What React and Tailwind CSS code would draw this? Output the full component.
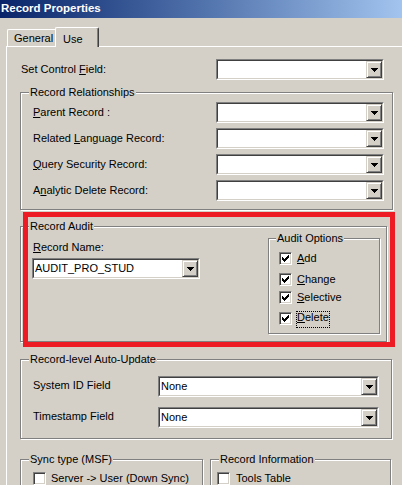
import React from 'react';

const font = { fontFamily: '"Liberation Sans", Arial, sans-serif' };

function Arrow() {
  return (
    <svg width="7" height="4" viewBox="0 0 7 4" shapeRendering="crispEdges">
      <path d="M0 0h7v1H0zM1 1h5v1H1zM2 2h3v1H2zM3 3h1v1H3z" fill="#000" />
    </svg>
  );
}

function Combo({ className = '', value = '' }) {
  return (
    <div className={`h-[21px] flex border border-t-[#808080] border-l-[#808080] border-r-white border-b-white ${className}`}>
      <div className="flex-1 flex bg-white border border-t-[#404040] border-l-[#404040] border-r-[#d4d0c8] border-b-[#d4d0c8]">
        <span className="flex-1 flex items-center pl-[1px] leading-none">{value}</span>
        <div className="w-[16px] h-full flex items-center justify-center bg-[#d4d0c8] border border-t-[#d4d0c8] border-l-[#d4d0c8] border-r-[#404040] border-b-[#404040] shadow-[inset_1px_1px_0_#fff,inset_-1px_-1px_0_#808080]">
          <Arrow />
        </div>
      </div>
    </div>
  );
}

function Check({ checked }) {
  return (
    <div className="w-[13px] h-[13px] shrink-0 bg-white border border-t-[#808080] border-l-[#808080] border-r-white border-b-white shadow-[inset_1px_1px_0_#404040,inset_-1px_-1px_0_#d4d0c8]">
      {checked && (
        <svg width="11" height="11" viewBox="0 0 11 11" shapeRendering="crispEdges">
          <path d="M2 4h1v3H2zM3 5h1v3H3zM4 6h1v3H4zM5 5h1v3H5zM6 4h1v3H6zM7 3h1v3H7zM8 2h1v3H8z" fill="#000" />
        </svg>
      )}
    </div>
  );
}

// etched group box, legend sits on the top line
function Group({ title, className = '', children, legendLeft = 'left-[8px]' }) {
  return (
    <div className={`relative border border-[#808080] shadow-[1px_1px_0_#fff,inset_1px_1px_0_#fff] ${className}`}>
      <span className={`absolute -top-[8px] ${legendLeft} px-[1px] bg-[#d4d0c8] leading-[14px] whitespace-nowrap`}>{title}</span>
      {children}
    </div>
  );
}

function U({ children }) {
  return <span className="underline underline-offset-[1px]">{children}</span>;
}

export default function App() {
  return (
    <div className="w-[402px] h-[485px] overflow-hidden bg-[#d4d0c8] text-[11px] text-black" style={font}>
      {/* title bar */}
      <div className="h-[18px] flex items-center pl-[1px] bg-linear-to-r from-[#0a246a] to-[#a2c4ee]">
        <span className="text-white font-bold text-[11.5px]">Record Properties</span>
      </div>

      {/* tabs */}
      <div className="h-[28px] flex items-end pl-[7px]">
        <div className="w-[48px] h-[17px] flex items-center pl-[6px] border-t border-l border-white rounded-tl-[2px]">
          General
        </div>
        <div className="relative z-10 -mb-[1px] w-[44px] h-[20px] flex items-start pt-[3px] pl-[7px] bg-[#d4d0c8] border-t border-l border-white border-r border-r-[#404040] shadow-[inset_-1px_0_0_#808080] rounded-t-[2px]">
          Use
        </div>
      </div>

      {/* tab page */}
      <div className="ml-[6px] h-[500px] border-t border-l border-white pl-[13px] flow-root">
        <div className="mt-[12px] flex items-center h-[21px] pl-[1px]">
          <span className="w-[195px]">Set Control <U>F</U>ield:</span>
          <Combo className="w-[168px]" />
        </div>

        <Group title="Record Relationships" className="mt-[12px] w-[373px] h-[118px]">
          <div className="pt-[9px] pl-[12px] flex flex-col gap-[5px]">
            <div className="flex items-center h-[21px]">
              <span className="w-[183px]"><U>P</U>arent Record :</span>
              <Combo className="w-[168px]" />
            </div>
            <div className="flex items-center h-[21px]">
              <span className="w-[183px]">Related <U>L</U>anguage Record:</span>
              <Combo className="w-[168px]" />
            </div>
            <div className="flex items-center h-[21px]">
              <span className="w-[183px]"><U>Q</U>uery Security Record:</span>
              <Combo className="w-[168px]" />
            </div>
            <div className="flex items-center h-[21px]">
              <span className="w-[183px]">A<U>n</U>alytic Delete Record:</span>
              <Combo className="w-[168px]" />
            </div>
          </div>
        </Group>

        {/* audit section with the red highlight drawn over it */}
        <div className="relative mt-[2px] h-[135px] pt-[14px]">
          <Group title="Record Audit" className="w-[367px] h-[116px]">
            <div className="flex">
              <div className="w-[247px] pl-[11px] pt-[13px]">
                <div className="h-[14px] flex items-center pl-[1px]"><U>R</U>ecord Name:</div>
                <Combo className="mt-[4px] w-[168px]" value="AUDIT_PRO_STUD" />
              </div>
              <Group title="Audit Options" legendLeft="left-[7px]" className="mt-[11px] w-[112px] h-[96px]">
                <div className="pl-[10px] pt-[13px] flex flex-col">
                  <div className="flex items-center h-[13px] gap-[5px]">
                    <Check checked />
                    <span><U>A</U>dd</span>
                  </div>
                  <div className="mt-[8px] flex items-center h-[13px] gap-[5px]">
                    <Check checked />
                    <span><U>C</U>hange</span>
                  </div>
                  <div className="mt-[5px] flex items-center h-[13px] gap-[5px]">
                    <Check checked />
                    <span><U>S</U>elective</span>
                  </div>
                  <div className="mt-[8px] flex items-start gap-[4px]">
                    <Check checked />
                    <span className="-mt-[1px] h-[17px] px-[1px] leading-[13px] outline outline-dotted outline-1 outline-black -outline-offset-1">
                      <U>D</U>elete
                    </span>
                  </div>
                </div>
              </Group>
            </div>
          </Group>
          <div className="absolute left-[3px] top-0 w-[372px] h-[135px] border-[5px] border-[#ed1c24] pointer-events-none" />
        </div>

        <Group title="Record-level Auto-Update" className="mt-[12px] w-[372px] h-[80px]">
          <div className="pt-[16px] pl-[12px] flex flex-col gap-[10px]">
            <div className="flex items-start h-[21px]">
              <span className="w-[125px] pt-[1px]">System ID Field</span>
              <Combo className="w-[221px]" value="None" />
            </div>
            <div className="flex items-start h-[21px]">
              <span className="w-[125px] pt-[1px]">Timestamp Field</span>
              <Combo className="w-[221px]" value="None" />
            </div>
          </div>
        </Group>

        <div className="mt-[20px] flex gap-[7px]">
          <Group title="Sync type (MSF)" className="w-[183px] h-[40px]">
            <div className="pt-[12px] pl-[12px] flex items-center gap-[5px] leading-[13px]">
              <Check />
              <span>Server -&gt; User (Down Sync)</span>
            </div>
          </Group>
          <Group title="Record Information" className="w-[181px] h-[40px]">
            <div className="pt-[12px] pl-[6px] flex items-center gap-[6px] leading-[13px]">
              <Check />
              <span>Tools Table</span>
            </div>
          </Group>
        </div>
      </div>
    </div>
  );
}
